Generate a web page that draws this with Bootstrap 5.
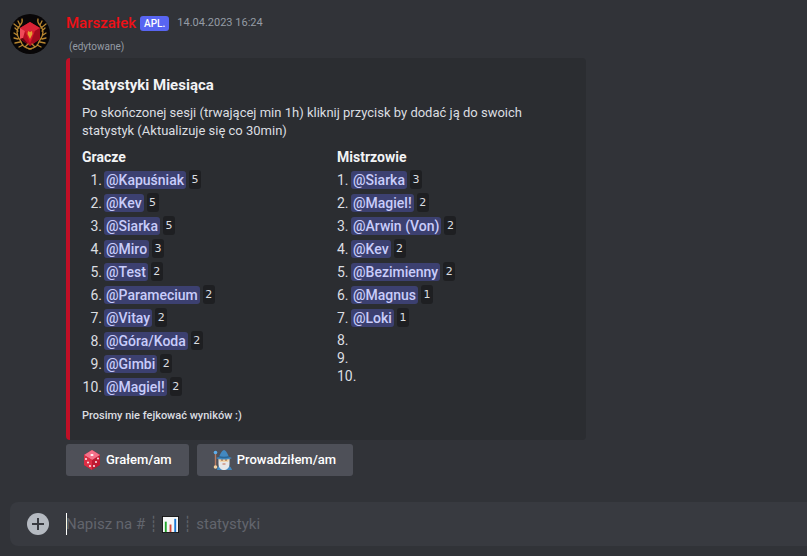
<!DOCTYPE html>
<html lang="pl" data-bs-theme="dark">
<head>
<meta charset="utf-8">
<meta name="viewport" content="width=device-width, initial-scale=1">
<title>Statystyki</title>
<link href="https://cdn.jsdelivr.net/npm/bootstrap@5.3.0/dist/css/bootstrap.min.css" rel="stylesheet">
<style>
body{background:#313338;color:#dbdee1;font-family:Roboto,"Noto Sans",sans-serif;font-size:14px;line-height:18px}
.message{padding:14px 16px 0 10px;gap:16px}
.avatar{width:40px;height:40px}
.author{color:#ee1016;font-size:15px;line-height:18px}
.app-tag{background:#5865f2;font-size:10px;line-height:15px;border-radius:3px;padding:0 4px}
.stamp{color:#949ba4;font-size:11px}
.edited{color:#949ba4;font-size:10px;line-height:14px;margin:8px 0 4px 3px}
.stat-embed{background:#2b2d31;border-left:4px solid #c00f26;border-radius:4px;max-width:520px;padding:18px 16px 16px 12px}
.stat-embed h1{font-size:15px;line-height:18px;color:#f2f3f5;margin-bottom:10px}
.stat-embed h2{font-size:14px;line-height:18px;color:#f2f3f5;margin-bottom:2px}
.stat-embed .intro{font-size:13px;margin:0 0 8px}
.stat-list li{display:flex;gap:2px;min-height:18px}
.stat-list li.filled{height:23px;align-items:center}
.stat-list li.filled + li:not(.filled){margin-top:2px}
.players .num{width:20px;text-align:right;white-space:nowrap;display:flex;justify-content:flex-end}
.masters{padding-left:11px}
.masters .num{min-width:12px}
.mention{color:#c9cdfb;background:#3c4070;border-radius:3px;padding:0 2px;line-height:18px;font-weight:500;text-decoration:none}
.mention:hover{background:#5865f2;color:#fff}
.count{background:#1e1f22;color:#dbdee1;border-radius:3px;font:11px/19px "DejaVu Sans",sans-serif;margin-left:1px;width:12px;text-align:center}
.note{font-size:11px;line-height:16px;font-weight:500;margin-top:10px}
.act{background:#4e5058;color:#fff;font-size:13px;font-weight:500;line-height:16px;height:32px;border:0;border-radius:3px;padding:2px 17px 2px 16px;gap:4px}
.act:hover{background:#6d6f78;color:#fff}
.act svg{width:20px;height:20px}
.composer{background:#383a40;border-radius:8px 0 0 8px;height:44px;margin:26px 0 10px 10px;padding-left:16px;gap:16px}
.composer .entry{height:22px}
.composer input{background:transparent;border:0;border-left:1px solid #fff;outline:0;color:#dbdee1;font-size:15px;height:22px}
.hint{left:0;top:0;color:#62656d;font-size:15px;line-height:22px;gap:4px;pointer-events:none}
.entry input:not(:placeholder-shown)+.hint{visibility:hidden}
</style>
<script src="https://cdn.jsdelivr.net/npm/bootstrap@5.3.0/dist/js/bootstrap.bundle.min.js"></script>
</head>
<body>
<main>
<article class="message d-flex align-items-start">
<svg class="avatar flex-shrink-0" viewBox="0 0 40 40" role="img" aria-label="Marszałek">
<circle cx="20" cy="20" r="20" fill="#080607"/>
<path d="M20 8l10 6v11l-10 7-10-7V14z" fill="#b50d20"/>
<path d="M20 8l10 6-5 3H15l-5-3z" fill="#d92336"/><path d="M10 14l5 3-2 7-3 1z" fill="#f04b59"/><path d="M15 17h10l-5 12z" fill="#da182c"/><path d="M30 14v11l-10 7 5-15z" fill="#a10a1d"/><path d="M10 25l3-1 7 8z" fill="#640412"/>
<path d="M18 17l2 1 2-1 .5 3-2.500 5-2.500-5z" fill="#e5a034"/>
<g fill="none" stroke="#b98730" stroke-width="1.3" stroke-linecap="round"><path d="M12 5c2 6-5 6-5 13 0 6 4 8 5 12 2 4 5 4 9 5M9 14l-5-4M8 17l-3-3M7 21l-3-2M8 25l-4-1M10 28l-5 1M13 31l-4 2M10 11l-2-4M15 33l3-3"/><path d="M28 5c-2 6 5 6 5 13 0 6-4 8-5 12-2 4-5 4-9 5M31 14l5-4M32 17l3-3M33 21l3-2M32 25l4-1M30 28l5 1M27 31l4 2M30 11l2-4M25 33l-3-3"/></g>
</svg>
<div class="flex-grow-1">
<header class="d-flex align-items-center"><span class="author fw-medium">Marszałek</span><span class="app-tag text-white fw-medium ms-1">APL.</span><time class="stamp ms-2" datetime="2023-04-14T16:24">14.04.2023 16:24</time></header>
<div class="edited">(edytowane)</div>
<section class="stat-embed">
<h1 class="fw-bold">Statystyki Miesiąca</h1>
<p class="intro">Po skończonej sesji (trwającej min 1h) kliknij przycisk by dodać ją do swoich statystyk (Aktualizuje się co 30min)</p>
<div class="row g-0">
<div class="col-6 players pe-2"><h2 class="fw-bold">Gracze</h2>
<ol class="stat-list list-unstyled mb-0">
<li class="filled"><span class="num">1.</span><a class="mention" href="#">@Kapuśniak</a><code class="count">5</code></li>
<li class="filled"><span class="num">2.</span><a class="mention" href="#">@Kev</a><code class="count">5</code></li>
<li class="filled"><span class="num">3.</span><a class="mention" href="#">@Siarka</a><code class="count">5</code></li>
<li class="filled"><span class="num">4.</span><a class="mention" href="#">@Miro</a><code class="count">3</code></li>
<li class="filled"><span class="num">5.</span><a class="mention" href="#">@Test</a><code class="count">2</code></li>
<li class="filled"><span class="num">6.</span><a class="mention" href="#">@Paramecium</a><code class="count">2</code></li>
<li class="filled"><span class="num">7.</span><a class="mention" href="#">@Vitay</a><code class="count">2</code></li>
<li class="filled"><span class="num">8.</span><a class="mention" href="#">@Góra/Koda</a><code class="count">2</code></li>
<li class="filled"><span class="num">9.</span><a class="mention" href="#">@Gimbi</a><code class="count">2</code></li>
<li class="filled"><span class="num">10.</span><a class="mention" href="#">@Magiel!</a><code class="count">2</code></li>
</ol></div>
<div class="col-6 masters"><h2 class="fw-bold">Mistrzowie</h2>
<ol class="stat-list list-unstyled mb-0">
<li class="filled"><span class="num">1.</span><a class="mention" href="#">@Siarka</a><code class="count">3</code></li>
<li class="filled"><span class="num">2.</span><a class="mention" href="#">@Magiel!</a><code class="count">2</code></li>
<li class="filled"><span class="num">3.</span><a class="mention" href="#">@Arwin (Von)</a><code class="count">2</code></li>
<li class="filled"><span class="num">4.</span><a class="mention" href="#">@Kev</a><code class="count">2</code></li>
<li class="filled"><span class="num">5.</span><a class="mention" href="#">@Bezimienny</a><code class="count">2</code></li>
<li class="filled"><span class="num">6.</span><a class="mention" href="#">@Magnus</a><code class="count">1</code></li>
<li class="filled"><span class="num">7.</span><a class="mention" href="#">@Loki</a><code class="count">1</code></li>
<li><span class="num">8.</span></li><li><span class="num">9.</span></li><li><span class="num">10.</span></li>
</ol></div>
</div>
<div class="note">Prosimy nie fejkować wyników :)</div>
</section>
<div class="d-flex flex-wrap gap-2 mt-1">
<button type="button" class="btn act d-flex align-items-center"><svg viewBox="0 0 20 20" aria-hidden="true"><path d="M10 0l8 5v10l-8 5-8-5V5z" fill="#be1931"/><path d="M10 0l8 5-8 5-8-5z" fill="#f4718a"/><path d="M2 5l8 5v10l-8-5z" fill="#dd2e44"/><g fill="#fff"><ellipse cx="10" cy="5" rx="1.6" ry="1"/><circle cx="4" cy="9" r=".9"/><circle cx="8" cy="16" r=".9"/><circle cx="6" cy="12.500" r=".9"/><circle cx="16" cy="8.500" r=".9"/><circle cx="14" cy="12" r=".9"/><circle cx="12" cy="16" r=".9"/></g></svg><span>Grałem/am</span></button>
<button type="button" class="btn act d-flex align-items-center"><svg viewBox="0 0 20 20" aria-hidden="true"><path d="M2.500 3v15" stroke="#b77a61" stroke-width="1.400"/><circle cx="2.500" cy="2.500" r="1.800" fill="#5dadec"/><path d="M4 20c0-4 3-5 7-5s7 1 8 5z" fill="#4289c1"/><circle cx="2.500" cy="17" r="1.800" fill="#f3d2a2"/><path d="M6 8h10v6H6z" fill="#f3d2a2"/><path d="M5.500 8v6c0 4 3 6 5.500 6s5.500-2 5.500-6V8L15 12l-4-1-4 1z" fill="#e6e7e8"/><path d="M7 8h8v3l-4 1-4-1z" fill="#f3d2a2"/><circle cx="9" cy="10" r=".7" fill="#662113"/><circle cx="13" cy="10" r=".7" fill="#662113"/><path d="M9.500 14h3" stroke="#c1694f"/><path d="M11 0c3 1 4 5 5 7l3 1c-4 2-12 2-16 0l3-1c1-2 2-6 5-7z" fill="#4289c1"/><path d="M6 6c3 1 7 1 10 0l.5 1.500c-3 1-8 1-11 0z" fill="#2a6797"/></svg><span>Prowadziłem/am</span></button>
</div>
</div>
</article>
<form class="composer d-flex align-items-center" onsubmit="return false">
<button type="button" class="btn p-0 border-0 d-flex" aria-label="Dodaj załącznik"><svg width="24" height="24" viewBox="0 0 24 24"><circle cx="12" cy="12" r="11" fill="#b5bac1"/><path d="M12 6v12M6 12h12" stroke="#383a40" stroke-width="2"/></svg></button>
<div class="entry position-relative flex-grow-1">
<input class="w-100 p-0 d-block" id="entry" type="text" placeholder=" " autocomplete="off">
<label class="hint position-absolute d-flex align-items-center" for="entry"><span>Napisz na #</span><span>┊</span><svg width="17" height="17" viewBox="0 0 18 18" aria-hidden="true"><path d="M0 0h18v18H0z" fill="#111"/><path d="M1 1h16v16H1z" fill="#f4f6f7"/><path d="M3 6h2v11H3z" fill="#22a52b"/><path d="M8 9h2v8H8z" fill="#d44a3c"/><path d="M13 3h2v14h-2z" fill="#1976d2"/></svg><span>┊</span><span>statystyki</span></label>
</div>
</form>
</main>
</body>
</html>
